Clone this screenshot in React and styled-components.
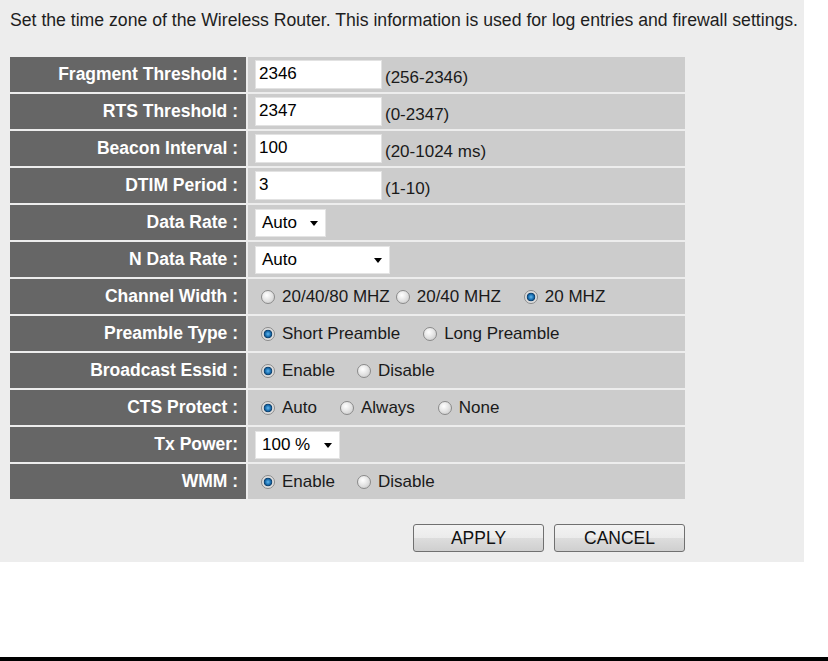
import React from 'react';
import styled, { createGlobalStyle } from 'styled-components';

const GlobalStyle = createGlobalStyle`
      html, body {
        margin: 0;
        padding: 0;
        background-color: #fff;
      }
      body {
        font-family: "Liberation Sans", Arial, sans-serif;
      }
`;

const Page = styled.div`
      display: flex;
      flex-direction: column;
      height: 661px;
      width: 828px;
      background-color: #fff;
`;

const Panel = styled.div`
      width: 804px;
      box-sizing: border-box;
      padding: 10px 10px 10px 10px;
      background-color: #ededed;
`;

const Description = styled.p`
      margin: 0;
      color: #1e1e1e;
      font-size: 17.65px;
      line-height: 20px;
      white-space: nowrap;
`;

const Table = styled.div`
      display: grid;
      grid-template-columns: 236px 437px;
      grid-auto-rows: 35px;
      gap: 2px;
      margin-top: 27px;
`;

const Label = styled.div`
      display: flex;
      align-items: center;
      justify-content: flex-end;
      padding-right: 8px;
      background-color: #666;
      color: #fff;
      font-size: 17.5px;
      font-weight: 700;
      white-space: nowrap;
`;

const Cell = styled.div`
      display: flex;
      align-items: center;
      padding-left: 7px;
      background-color: #ccc;
      color: #1a1a1a;
      font-size: 17px;
      white-space: nowrap;
`;

const TextInput = styled.div`
      box-sizing: border-box;
      width: 127px;
      height: 29px;
      padding: 3px 0 0 3px;
      background-color: #fff;
      border: 1px solid #e2e2e2;
      color: #000;
      font-size: 17px;
`;

const Range = styled.span`
      margin-left: 3px;
      padding-top: 7px;
`;

const Select = styled.div`
      position: relative;
      box-sizing: border-box;
      width: ${p => p.$width}px;
      height: 28px;
      padding: 3px 0 0 6px;
      background-color: #fff;
      border: 1px solid #e4e4e4;
      color: #000;
      font-size: 17px;
`;

const Arrow = styled.span`
      position: absolute;
      right: 7px;
      top: 11px;
      width: 0;
      height: 0;
      border-left: 4px solid transparent;
      border-right: 4px solid transparent;
      border-top: 5px solid #000;
`;

const Option = styled.label`
      display: flex;
      align-items: center;
      margin-right: ${p => p.$gap}px;
`;

const Radio = styled.span`
      box-sizing: border-box;
      width: 14px;
      height: 14px;
      margin: 0 7px 0 6px;
      border-radius: 50%;
      border: 1px solid #8a8a8a;
      background: ${p => p.$checked
        ? 'radial-gradient(circle at 50% 50%, #62b8ef 0, #1c72b4 2.5px, #0e3c66 4px, #d9d9d9 4.6px, #f4f4f4 100%)'
        : 'radial-gradient(circle at 40% 35%, #ffffff 0, #e6e6e6 45%, #c4c4c4 100%)'};
`;

const Actions = styled.div`
      display: flex;
      justify-content: flex-end;
      gap: 10px;
      width: 675px;
      margin-top: 25px;
`;

const Button = styled.button`
      width: 131px;
      height: 28px;
      padding: 0;
      border: 1px solid #707070;
      border-radius: 3px;
      background: linear-gradient(#f3f3f3 0%, #ebebeb 50%, #dddddd 51%, #cfcfcf 100%);
      color: #111;
      font-family: "Liberation Sans", Arial, sans-serif;
      font-size: 17.5px;
`;

const Bar = styled.div`
      margin-top: auto;
      height: 4px;
      background-color: #000;
`;

const Radios = ({ items }) => (
    <>
        {items.map(item => (
            <Option key={item.text} $gap={item.gap || 0}>
                <Radio $checked={item.checked} />
                {item.text}
            </Option>
        ))}
    </>
);

export default () => {
    return (
        <Page>
            <GlobalStyle />
            <Panel>
                <Description>
                    Set the time zone of the Wireless Router. This information is used for log entries and firewall settings.
                </Description>
                <Table>
                    <Label>Fragment Threshold :</Label>
                    <Cell>
                        <TextInput>2346</TextInput>
                        <Range>(256-2346)</Range>
                    </Cell>
                    <Label>RTS Threshold :</Label>
                    <Cell>
                        <TextInput>2347</TextInput>
                        <Range>(0-2347)</Range>
                    </Cell>
                    <Label>Beacon Interval :</Label>
                    <Cell>
                        <TextInput>100</TextInput>
                        <Range>(20-1024 ms)</Range>
                    </Cell>
                    <Label>DTIM Period :</Label>
                    <Cell>
                        <TextInput>3</TextInput>
                        <Range>(1-10)</Range>
                    </Cell>
                    <Label>Data Rate :</Label>
                    <Cell>
                        <Select $width={71}>Auto<Arrow /></Select>
                    </Cell>
                    <Label>N Data Rate :</Label>
                    <Cell>
                        <Select $width={135}>Auto<Arrow /></Select>
                    </Cell>
                    <Label>Channel Width :</Label>
                    <Cell>
                        <Radios items={[
                            { text: '20/40/80 MHZ', gap: 0 },
                            { text: '20/40 MHZ', gap: 17 },
                            { text: '20 MHZ', checked: true },
                        ]} />
                    </Cell>
                    <Label>Preamble Type :</Label>
                    <Cell>
                        <Radios items={[
                            { text: 'Short Preamble', checked: true, gap: 17 },
                            { text: 'Long Preamble' },
                        ]} />
                    </Cell>
                    <Label>Broadcast Essid :</Label>
                    <Cell>
                        <Radios items={[
                            { text: 'Enable', checked: true, gap: 16 },
                            { text: 'Disable' },
                        ]} />
                    </Cell>
                    <Label>CTS Protect :</Label>
                    <Cell>
                        <Radios items={[
                            { text: 'Auto', checked: true, gap: 17 },
                            { text: 'Always', gap: 17 },
                            { text: 'None' },
                        ]} />
                    </Cell>
                    <Label>Tx Power:</Label>
                    <Cell>
                        <Select $width={85}>100 %<Arrow /></Select>
                    </Cell>
                    <Label>WMM :</Label>
                    <Cell>
                        <Radios items={[
                            { text: 'Enable', checked: true, gap: 16 },
                            { text: 'Disable' },
                        ]} />
                    </Cell>
                </Table>
                <Actions>
                    <Button>APPLY</Button>
                    <Button>CANCEL</Button>
                </Actions>
            </Panel>
            <Bar />
        </Page>
    )
}
